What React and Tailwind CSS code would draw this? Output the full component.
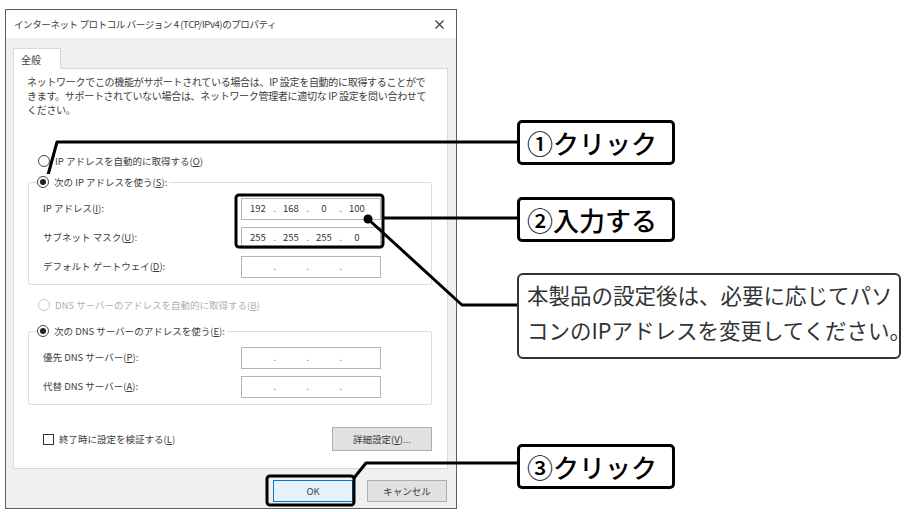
import React from "react";

function Radio({ checked = false, disabled = false }) {
  return (
    <span
      className={
        "flex h-[12px] w-[12px] shrink-0 items-center justify-center rounded-full border bg-white " +
        (disabled ? "border-[#c8c8c8]" : "border-[#444]")
      }
    >
      {checked && <span className="h-[6px] w-[6px] rounded-full bg-[#222]" />}
    </span>
  );
}

function IpField({ parts = ["", "", "", ""] }) {
  return (
    <div className="flex h-[22px] w-[140px] items-center border border-[#b4b4b4] bg-white pl-[2px] text-[9.5px] text-[#333]">
      {parts.map((p, i) => (
        <React.Fragment key={i}>
          {i > 0 && <span className="w-[5px] text-center text-[#666]">.</span>}
          <span className="w-[28px] text-center">{p}</span>
        </React.Fragment>
      ))}
    </div>
  );
}

function FieldRow({ label, parts }) {
  return (
    <div className="flex h-[29px] items-center">
      <span className="w-[212px] pl-[14px]">{label}</span>
      <IpField parts={parts} />
    </div>
  );
}

function GroupBox({ caption, children }) {
  return (
    <div className="ml-[14px] mr-[15px] flex flex-col">
      <div className="relative z-10 -mb-[8px] ml-[9px] flex h-[16px] w-fit items-center gap-[5px] bg-white pr-[2px]">
        <Radio checked />
        <span>{caption}</span>
      </div>
      <div className="rounded-[2px] border border-[#dcdcdc] pb-[3px] pt-[11px]">{children}</div>
    </div>
  );
}

function Dialog() {
  return (
    <div className="ml-[5px] mt-[9px] flex h-[500px] w-[452px] shrink-0 flex-col border border-[#55606a] bg-[#f0f0f0] text-[9.5px] text-[#3c3c3c]">
      <div className="flex h-[28px] items-center justify-between bg-white pl-[8px] pr-[12px]">
        <span className="tracking-[-0.4px]">インターネット プロトコル バージョン 4 (TCP/IPv4)のプロパティ</span>
        <svg width="9" height="9" viewBox="0 0 9 9">
          <path d="M0.5 0.5L8.5 8.5M8.5 0.5L0.5 8.5" stroke="#333" strokeWidth="1.1" />
        </svg>
      </div>

      <div className="pl-[7px] pt-[10px]">
        <div className="relative z-10 -mb-px flex h-[21px] w-[48px] items-center border border-b-0 border-[#d9d9d9] bg-white pl-[7px] text-[10px]">
          全般
        </div>
        <div className="flex h-[401px] w-[435px] flex-col border border-[#d9d9d9] bg-white">
          <p className="whitespace-nowrap pl-[13px] pt-[6px] text-[10px] leading-[14px] tracking-[-0.3px]">
            ネットワークでこの機能がサポートされている場合は、IP 設定を自動的に取得することがで
            <br />
            きます。サポートされていない場合は、ネットワーク管理者に適切な IP 設定を問い合わせて
            <br />
            ください。
          </p>

          <div className="ml-[24px] mt-[36px] flex h-[16px] items-center gap-[5px]">
            <Radio />
            <span>IP アドレスを自動的に取得する(<u>O</u>)</span>
          </div>

          <div className="mt-[5px]">
            <GroupBox caption={<>次の IP アドレスを使う(<u>S</u>):</>}>
              <FieldRow label={<>IP アドレス(<u>I</u>):</>} parts={["192", "168", "0", "100"]} />
              <FieldRow label={<>サブネット マスク(<u>U</u>):</>} parts={["255", "255", "255", "0"]} />
              <FieldRow label={<>デフォルト ゲートウェイ(<u>D</u>):</>} />
            </GroupBox>
          </div>

          <div className="ml-[24px] mt-[12px] flex h-[16px] items-center gap-[5px] text-[#b0b0b0]">
            <Radio disabled />
            <span>DNS サーバーのアドレスを自動的に取得する(<u>B</u>)</span>
          </div>

          <div className="mt-[10px]">
            <GroupBox caption={<>次の DNS サーバーのアドレスを使う(<u>E</u>):</>}>
              <FieldRow label={<>優先 DNS サーバー(<u>P</u>):</>} />
              <FieldRow label={<>代替 DNS サーバー(<u>A</u>):</>} />
            </GroupBox>
          </div>

          <div className="ml-[14px] mr-[15px] mt-[22px] flex h-[24px] items-center justify-between">
            <div className="flex items-center gap-[5px] pl-[15px]">
              <span className="h-[11px] w-[11px] border border-[#333] bg-white" />
              <span>終了時に設定を検証する(<u>L</u>)</span>
            </div>
            <div className="flex h-[24px] w-[100px] items-center justify-center border border-[#adadad] bg-[#e1e1e1]">
              詳細設定(<u>V</u>)...
            </div>
          </div>
        </div>
      </div>

      <div className="mt-[11px] flex justify-end gap-[14px] pr-[9px]">
        <div className="flex h-[22px] w-[80px] items-center justify-center border border-[#0078d7] bg-[#e5f1fb]">
          OK
        </div>
        <div className="flex h-[22px] w-[80px] items-center justify-center border border-[#adadad] bg-[#e1e1e1]">
          キャンセル
        </div>
      </div>
    </div>
  );
}

function Callout({ children, className = "" }) {
  return (
    <div
      className={
        "flex h-[45px] w-[158px] items-center rounded-[5px] border-[3px] border-black bg-white pl-[7px] text-[26px] font-medium leading-none text-black " +
        className
      }
    >
      {children}
    </div>
  );
}

export default function App() {
  return (
    <div className="relative flex h-[512px] w-[917px] overflow-hidden bg-white font-['Noto_Sans_CJK_JP','Noto_Sans',sans-serif]">
      <Dialog />

      <div className="ml-[60px] flex flex-col">
        <Callout className="mt-[120px]">①クリック</Callout>
        <Callout className="mt-[32px] h-[44px]">②入力する</Callout>
        <div className="mt-[31px] h-[86px] w-[384px] whitespace-nowrap rounded-[6px] border-2 border-[#333] bg-white pl-[8px] pt-[2px] text-[21.5px] leading-[35px] text-[#333]">
          本製品の設定後は、必要に応じてパソ
          <br />
          コンのIPアドレスを変更してください。
        </div>
        <Callout className="mt-[85px]">③クリック</Callout>
      </div>

      <svg className="pointer-events-none absolute left-0 top-0" width="917" height="512" viewBox="0 0 917 512">
        <g fill="none" stroke="#000" strokeWidth="3" strokeLinejoin="round">
          <polyline points="48,175 57,142 517,142" />
          <rect x="236" y="195" width="147" height="52" rx="3" />
          <line x1="383" y1="218" x2="517" y2="218" />
          <polyline points="368,219 462,305 517,305" />
          <rect x="267" y="476" width="87" height="29" rx="3" />
          <polyline points="354,478 366,463 517,463" />
        </g>
        <circle cx="368" cy="219" r="4.5" fill="#000" />
      </svg>
    </div>
  );
}
